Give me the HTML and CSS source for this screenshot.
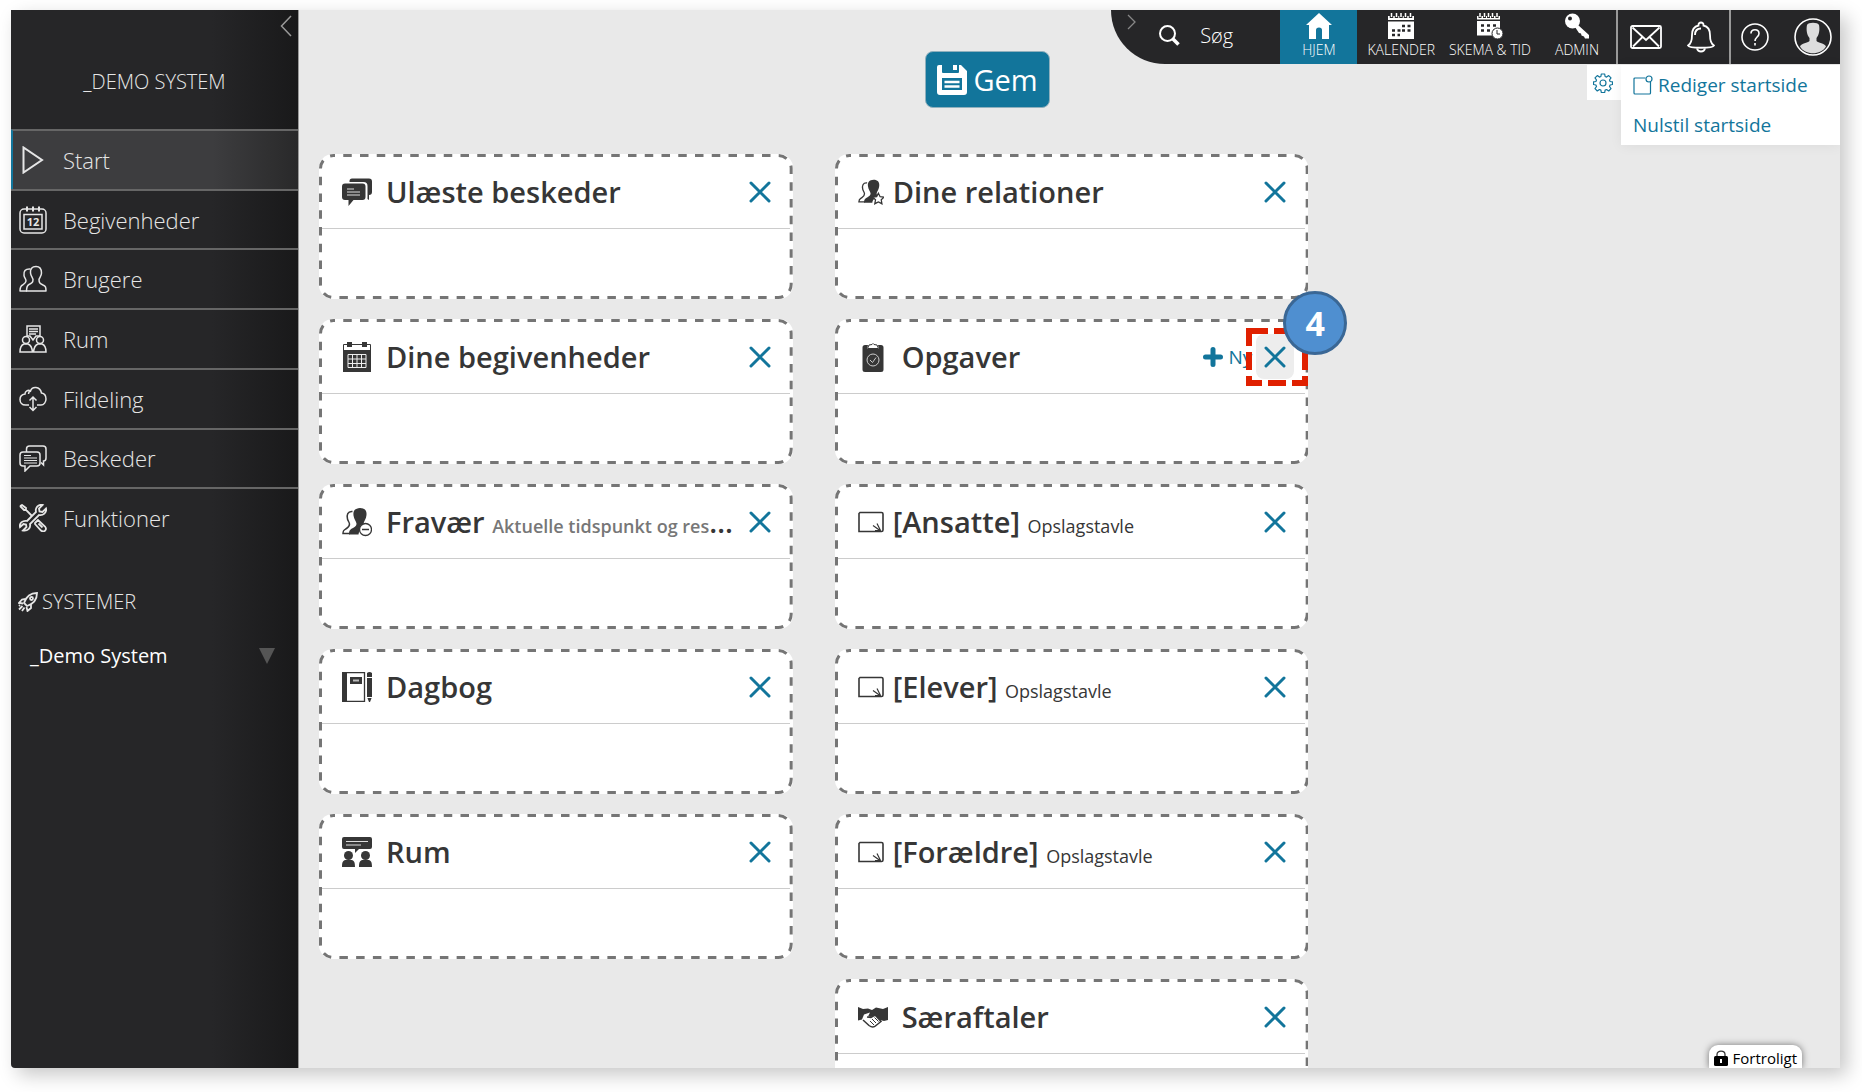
FILE: index.html
```html
<!DOCTYPE html>
<html lang="da">
<head>
    <meta charset="UTF-8">
    <meta name="viewport" content="width=device-width, initial-scale=1.0">
    <title>Startside</title>
    <link rel="stylesheet" href="styles.css">
</head>
<body>
    <!-- Shared icons -->
    <svg class="sprite" aria-hidden="true">
        <symbol id="close" viewBox="0 0 22 22">
            <path d="M2 2l18 18M20 2L2 20" fill="none" stroke="currentColor" stroke-width="3" stroke-linecap="round"/>
        </symbol>
        <symbol id="board" viewBox="0 0 26 22">
            <path d="M2 1.500h21.500q1.500 0 1.500 1.500v16q0 1.500-1.500 1.500H1V2.500z" fill="none" stroke="currentColor" stroke-width="1.600"/>
            <path d="M15 14.500l7 5M19 12.500l3.500 7M17 19.500h6" fill="none" stroke="currentColor" stroke-width="1.200"/>
        </symbol>
        <symbol id="persons" viewBox="0 0 30 30">
            <path d="M10.500 4.500C5.500 4 4.500 8 5.500 12c.5 2 2 3.500 2 5s-.5 3-3 4.500-3.500 1.500-3.500 5h7" fill="none" stroke="currentColor" stroke-width="1.500"/>
            <path d="M18 1c4.500 0 7 2.500 6.500 7-.3 4-2.500 6-3 8.500 0 2 1 3 3.500 4.200C22 21 17 22 16.500 27.500H7c0-4 1-5 4-6.500 2.500-1.200 3.500-2.500 3.500-4.500-.5-2.500-2.500-4-3-8C11 3.500 13 1.500 18 1z" fill="currentColor"/>
        </symbol>
        <symbol id="outline" overflow="visible">
            <rect class="outline-rect" x="1.500" y="1.500" rx="13" fill="none" stroke="#757575" stroke-width="3" stroke-dasharray="8.500 8.250" stroke-dashoffset="7"/>
        </symbol>
    </svg>

    <div class="app">
        <aside class="sidebar">
            <button class="sidebar-toggle" aria-label="Skjul menu">
                <svg width="12" height="22" viewBox="0 0 12 22"><path d="M11 1L1.500 11 11 21" fill="none" stroke="currentColor" stroke-width="1.500"/></svg>
            </button>
            <div class="system-name">_DEMO SYSTEM</div>

            <nav class="side-nav">
                <a href="#" class="active">
                    <svg viewBox="0 0 28 28"><path d="M4.500 1.500v25L23 14z" fill="none" stroke="currentColor" stroke-width="2"/></svg>
                    Start
                </a>
                <a href="#">
                    <svg viewBox="0 0 28 28">
                        <g fill="none" stroke="currentColor" stroke-width="1.500">
                            <rect x="1" y="3" width="26" height="24" rx="4"/>
                            <rect x="5" y="8.500" width="18" height="14.500"/>
                            <path d="M8 .5v5M14 .5v5M20 .5v5" stroke-width="2"/>
                        </g>
                        <text x="14" y="20" font-size="11" font-weight="700" text-anchor="middle" fill="currentColor">12</text>
                    </svg>
                    Begivenheder
                </a>
                <a href="#">
                    <svg viewBox="0 0 28 28"><g fill="none" stroke="currentColor" stroke-width="1.500" stroke-linejoin="round">
                        <path d="M17 1.500c-4 0-6 2.500-5.500 6.500.3 3 2 4.500 2.500 6.500 0 3-1 3.500-4 5-2 1-2.500 2.500-2.500 6.500H27c0-4-.5-5-3-6-3-1.500-4-2-4-5.500.5-2 2.500-3.500 2.500-6.500 0-4-1.500-6.500-5.500-6.500z"/>
                        <path d="M11.500 4C6 3.500 4.500 6.500 5 10.500c.3 2.500 2 3 2 5.500 0 2-1 2.500-3.500 4C1.500 21 1 22.500 1 26h7"/>
                    </g></svg>
                    Brugere
                </a>
                <a href="#">
                    <svg viewBox="0 0 28 28"><g fill="none" stroke="currentColor" stroke-width="1.500">
                        <path d="M8 1h13v10h-4l-3 4-3-4H8zM10 4h9M10 6.500h9M10 9h7"/>
                        <circle cx="7" cy="15" r="3.500"/><circle cx="21" cy="15" r="3.500"/>
                        <path d="M1 27c0-5 1-7 4-8h4c3 1 4 3 4.500 8zM14.500 27c.5-5 1.500-7 4.500-8h4c3 1 4 3 4 8z"/>
                    </g></svg>
                    Rum
                </a>
                <a href="#">
                    <svg viewBox="0 0 28 28"><g fill="none" stroke="currentColor" stroke-width="1.500">
                        <path d="M10 20H6.500C3 20 1 17.500 1 14.500S3 9.500 6 9c0-3 3-4.500 5.500-3C13 1 21 1 22.500 8c3 .5 4.500 3 4.500 6s-2 6-5 6h-4"/>
                        <path d="M11.500 6c-1.500.5-2 1.500-2 3M14 12v13M10.500 15.500L14 12l3.500 3.500M10.500 22l3.500 3.500 3.500-3.500"/>
                    </g></svg>
                    Fildeling
                </a>
                <a href="#">
                    <svg viewBox="0 0 28 28"><g fill="none" stroke="currentColor" stroke-width="1.500">
                        <path d="M4 8h14q3 0 3 3v8q0 3-3 3h-7l-5 5v-5H4q-3 0-3-3v-8q0-3 3-3z"/>
                        <path d="M7.500 8V5q0-3 3-3H24q3 0 3 3v9q0 3-2.500 3v4L22 18.500"/>
                        <path d="M5 11.500h7M5 14h13M5 16.500h13M5 19h13" stroke-width="1.200"/>
                    </g></svg>
                    Beskeder
                </a>
                <a href="#">
                    <svg viewBox="0 0 28 28"><g fill="none" stroke="currentColor" stroke-width="1.800">
                        <path d="M1 2l2-1 4 3v2l6 6M7 6H5L1 2"/>
                        <path d="M8 17l9-9c-1-4 2-8 6.500-7L20 4.500l.5 3 3 .5L27 4.500c1 4-3 7.500-7 6.500l-9 9c1 4-2.500 7.500-7 6.500L7.500 23 7 20.500 4.500 20 1 23c-1-4 3-7 7-6z"/>
                        <path d="M16 19l3-3 7 6.500c2.500 3-1 6.500-4 4L16 20zM19.500 19.500l4 4"/>
                    </g></svg>
                    Funktioner
                </a>
            </nav>

            <div class="systems-title">
                <svg width="20" height="20" viewBox="0 0 20 20"><g fill="none" stroke="currentColor" stroke-width="1.800">
                    <path d="M6 11C8 5 12 1 19 1c0 7-4 11-10 13z"/><circle cx="13.500" cy="6.500" r="1.500"/>
                    <path d="M7.500 7L4 7.500 1 11l4 .5M13 12.500V16l-3.500 3-1-4M4.500 14L1 17.500M6.500 15.500L4 19M2 13l-1 1"/>
                </g></svg>
                SYSTEMER
            </div>
            <button class="system-picker">_Demo System <span class="triangle"></span></button>
        </aside>

        <main class="main">
            <header class="topbar">
                <button class="topbar-toggle" aria-label="Skjul topmenu">
                    <svg width="9" height="16" viewBox="0 0 9 16"><path d="M1 1l7 7-7 7" fill="none" stroke="currentColor" stroke-width="1.300"/></svg>
                </button>
                <label class="search">
                    <svg width="21" height="21" viewBox="0 0 21 21"><circle cx="8.500" cy="8.500" r="7.500" fill="none" stroke="currentColor" stroke-width="2"/><path d="M13.500 13.500l6 6" stroke="currentColor" stroke-width="3.500"/></svg>
                    <input type="text" placeholder="Søg" aria-label="Søg">
                </label>
                <nav class="top-nav">
                    <a href="#" class="active">
                        <svg width="26" height="26" viewBox="0 0 26 26"><path d="M13 0l13 12h-3v14h-7v-9q0-2.500-3-2.500T10 17v9H3V12H0z" fill="currentColor"/></svg>
                        HJEM
                    </a>
                    <a href="#">
                        <svg width="26" height="26" viewBox="0 0 26 26">
                            <path d="M0 3h26v4H0zM0 8.500h26V26H0z" fill="currentColor"/>
                            <path d="M3.500 0v5M8.500 0v5M13 0v5M17.500 0v5M22.500 0v5" stroke="#262628" stroke-width="3.500"/>
                            <path d="M3.500 0v4M8.500 0v4M13 0v4M17.500 0v4M22.500 0v4" stroke="currentColor" stroke-width="1.500"/>
                            <path d="M14 13h9M14 17.500h9M4 17.500h9M4 22h8" stroke="#262628" stroke-width="2.500" stroke-dasharray="3 2.500"/>
                        </svg>
                        KALENDER
                    </a>
                    <a href="#">
                        <svg width="26" height="26" viewBox="0 0 26 26">
                            <path d="M0 3h23v3.500H0zM0 8h23v14.500H0z" fill="currentColor"/>
                            <path d="M3 0v5M7.500 0v5M11.500 0v5M15.500 0v5M20 0v5" stroke="#262628" stroke-width="3"/>
                            <path d="M3 0v4M7.500 0v4M11.500 0v4M15.500 0v4M20 0v4" stroke="currentColor" stroke-width="1.500"/>
                            <path d="M4 12.500h16M4 17.500h13" stroke="#262628" stroke-width="2.500" stroke-dasharray="3 3"/>
                            <circle cx="20.500" cy="20.500" r="5.500" fill="currentColor" stroke="#262628"/>
                            <path d="M20 17v4h3" fill="none" stroke="#262628"/>
                        </svg>
                        SKEMA &amp; TID
                    </a>
                    <a href="#">
                        <svg width="26" height="26" viewBox="0 0 26 26"><path d="M14 12l11 10v3.500h-4l-1-2-2.500-1-.5-2-2-.5L11 14" fill="currentColor"/><circle cx="8.500" cy="8" r="7.500" fill="currentColor"/><circle cx="6" cy="5.500" r="2" fill="#262628"/></svg>
                        ADMIN
                    </a>
                </nav>
                <div class="top-group">
                    <button aria-label="Beskeder">
                        <svg width="32" height="24" viewBox="0 0 32 24"><g fill="none" stroke="currentColor" stroke-width="1.800"><rect x="1" y="1" width="30" height="22" rx="1.500"/><path d="M2.500 2.500L16 15 29.500 2.500M3 21.500l9.500-9.500M29 21.500L19.500 12"/></g></svg>
                    </button>
                    <button aria-label="Notifikationer">
                        <svg width="28" height="32" viewBox="0 0 28 32"><g fill="none" stroke="currentColor" stroke-width="1.800"><path d="M11.500 4.500C11 .5 17 .5 16.500 4.500 21 5.500 23 9 23 14c0 6 1 9 4 10.500-1 3-25 3-26 0C4 23 5 20 5 14c0-5 2-8.500 6.500-9.500zM10 27.500c1 4 7 4 8 0M8 14c0-4 1.500-6.500 6-6.500"/></g></svg>
                    </button>
                </div>
                <div class="top-group">
                    <button aria-label="Hjælp">
                        <svg width="28" height="28" viewBox="0 0 28 28"><g fill="none" stroke="currentColor" stroke-width="1.600"><circle cx="14" cy="14" r="13"/><path d="M10 10.500c0-5 8-5 8 0 0 3.500-4 3.500-4 7.500M14 20v2.500"/></g></svg>
                    </button>
                    <button aria-label="Profil">
                        <svg width="38" height="38" viewBox="0 0 38 38"><circle cx="19" cy="19" r="18" fill="none" stroke="currentColor" stroke-width="1.600"/><path d="M13 7c1-3 11-3 12 0 1 5 0 10-2.500 13v3c2 2 8 2 9.500 5.500-5 9-21 9-26 0 1.500-3.500 7.500-3.500 9.500-5.500v-3C13 17 12 12 13 7z" fill="#ddd"/></svg>
                    </button>
                </div>
            </header>

            <div class="page-menu">
                <button class="gear" aria-label="Indstillinger">
                    <svg width="20" height="20" viewBox="0 0 20 20"><g fill="none" stroke="currentColor" stroke-width="1.200" stroke-linejoin="round"><circle cx="10" cy="10" r="3"/><path d="M8.300 1h3.400l.4 2.500 1.500.6 2.100-1.500 2.300 2.300-1.500 2.100.6 1.500 2.400.4v2.600l-2.400.5-.6 1.500 1.500 2.100-2.300 2.400-2.100-1.500-1.500.6-.4 2.400H8.300l-.4-2.400-1.500-.6-2.100 1.500L2 15.600l1.500-2.100-.6-1.500-2.400-.5V8.900l2.400-.4L3.500 7 2 4.900l2.300-2.300 2.100 1.500 1.500-.6z"/></g></svg>
                </button>
                <div class="page-menu-list">
                    <a href="#">
                        <svg width="20" height="20" viewBox="0 0 20 20"><g fill="none" stroke="currentColor" stroke-width="1.200"><path d="M12.500 3H2Q1 3 1 4v14q0 1 1 1h14.500q1 0 1-1V7"/><circle cx="16" cy="4" r="3"/></g></svg>
                        Rediger startside
                    </a>
                    <a href="#">Nulstil startside</a>
                </div>
            </div>

            <div class="save-row">
                <button class="save">
                    <svg width="30" height="30" viewBox="0 0 30 30">
                        <path d="M2 0h3v7q0 1 1 1h15q1 0 1-1V0h2l6 6v21q0 3-3 3H3q-3 0-3-3V2q0-2 2-2z" fill="currentColor"/>
                        <path d="M16 0h4v5h-4z" fill="currentColor"/>
                        <path d="M5 13h20v12H5z" fill="#12759b"/>
                        <path d="M7.500 17h15M7.500 21.500h15" stroke="currentColor" stroke-width="2.500"/>
                    </svg>
                    Gem
                </button>
            </div>

            <div class="board">
                <div class="column">
                    <section class="card">
                        <svg class="outline"><use href="#outline"/></svg>
                        <header>
                            <svg class="icon" viewBox="0 0 30 30"><path d="M10 1.500h17q3 0 3 3V15q0 3-3 3v5l-1.500-1V9q0-4-4-4H7.500V4q0-2.500 2.500-2.500z" fill="currentColor"/><path d="M3 6.500h17.500q3 0 3 3V20q0 3-3 3h-9L6.500 29v-6H3q-3 0-3-3V9.500q0-3 3-3z" fill="currentColor"/><path d="M5 12h7M5 15h13M5 18h13" stroke="#ddd"/></svg>
                            <h2>Ulæste beskeder</h2>
                            <button class="close" aria-label="Fjern Ulæste beskeder"><svg><use href="#close"/></svg></button>
                        </header>
                    </section>
                    <section class="card">
                        <svg class="outline"><use href="#outline"/></svg>
                        <header>
                            <svg class="icon" viewBox="0 0 30 30"><path d="M1.500 9V2.500h27V9" fill="none" stroke="currentColor"/><path d="M5 0h5v5H5zM20 0h5v5h-5zM1 8h28v22H1z" fill="currentColor"/><path d="M6 12.500h18v13H6zM6 17h18M6 21.500h18M10.500 12.500v13M15 12.500v13M19.500 12.500v13" fill="none" stroke="#eee"/></svg>
                            <h2>Dine begivenheder</h2>
                            <button class="close" aria-label="Fjern Dine begivenheder"><svg><use href="#close"/></svg></button>
                        </header>
                    </section>
                    <section class="card">
                        <svg class="outline"><use href="#outline"/></svg>
                        <header>
                            <svg class="icon" viewBox="0 0 30 30"><use href="#persons"/><circle cx="23.500" cy="22.500" r="6" fill="#fff" stroke="currentColor" stroke-width="1.300"/><path d="M20 22.500h7" stroke="currentColor" stroke-width="1.500"/></svg>
                            <h2>Fravær <small class="muted">Aktuelle tidspunkt og res</small>…</h2>
                            <button class="close" aria-label="Fjern Fravær"><svg><use href="#close"/></svg></button>
                        </header>
                    </section>
                    <section class="card">
                        <svg class="outline"><use href="#outline"/></svg>
                        <header>
                            <svg class="icon" viewBox="0 0 30 30"><path d="M.5.500h22v29H.5z" fill="none" stroke="currentColor" stroke-width="1.300"/><path d="M0 0h5v30H0zM8 5h12v7H8zM25 1q2.500-2 5 0v4h-5zM25 6h5v19l-2 5h-1l-2-5z" fill="currentColor"/><path d="M11 8.500h6" stroke="#bbb" stroke-width="2"/><path d="M25 25.500h5" stroke="#fff"/></svg>
                            <h2>Dagbog</h2>
                            <button class="close" aria-label="Fjern Dagbog"><svg><use href="#close"/></svg></button>
                        </header>
                    </section>
                    <section class="card">
                        <svg class="outline"><use href="#outline"/></svg>
                        <header>
                            <svg class="icon" viewBox="0 0 30 30"><path d="M2 0h26q2 0 2 2v8q0 2-2 2H17l-4 4v-4H2q-2 0-2-2V2q0-2 2-2zM0 30c0-5 1-7 4-7h5c3 0 4 2 4 7zM17 30c0-5 1-7 4-7h5c3 0 4 2 4 7z" fill="currentColor"/><circle cx="6.500" cy="18.500" r="4.500" fill="currentColor"/><circle cx="23.500" cy="18.500" r="4.500" fill="currentColor"/><path d="M4 4.500h22M4 8h15" stroke="#ddd" stroke-width="1.200"/></svg>
                            <h2>Rum</h2>
                            <button class="close" aria-label="Fjern Rum"><svg><use href="#close"/></svg></button>
                        </header>
                    </section>
                </div>

                <div class="column">
                    <section class="card">
                        <svg class="outline"><use href="#outline"/></svg>
                        <header>
                            <svg class="icon small" viewBox="0 0 30 30"><use href="#persons"/><path d="M23.500 16.500l2 4 4.500.5-3.200 3 .8 4.500-4.100-2.100-4.100 2.100.8-4.500L17 21l4.500-.5z" fill="#fff" stroke="currentColor" stroke-width="1.500"/></svg>
                            <h2>Dine relationer</h2>
                            <button class="close" aria-label="Fjern Dine relationer"><svg><use href="#close"/></svg></button>
                        </header>
                    </section>
                    <section class="card">
                        <svg class="outline"><use href="#outline"/></svg>
                        <header>
                            <svg class="icon" viewBox="0 0 30 30"><path d="M7 3h3l-1 4h12l-1-4h3q2.500 0 2.500 2.500v22Q25.500 30 23 30H7q-2.500 0-2.500-2.500v-22Q4.500 3 7 3z" fill="currentColor"/><path d="M9.500 6.500L11 3l3-.5q1-2 2 0l3 .5 1.500 3.500z" fill="#fff" stroke="currentColor"/><circle cx="15" cy="18" r="6" fill="none" stroke="#ccc"/><path d="M12 18l2.500 2.500 3.500-5" fill="none" stroke="#ccc"/></svg>
                            <h2>Opgaver</h2>
                            <button class="new"><svg width="20" height="20" viewBox="0 0 20 20"><path d="M10 2.500v15M2.500 10h15" stroke="currentColor" stroke-width="5" stroke-linecap="round"/></svg>Ny</button>
                            <button class="close hovered" aria-label="Fjern Opgaver"><svg><use href="#close"/></svg></button>
                        </header>
                        <div class="marker">
                            <svg width="62" height="58" viewBox="0 0 62 58"><g stroke="#e02000" stroke-width="6"><path d="M0 3h62" stroke-dasharray="22 6"/><path d="M0 55h62" stroke-dasharray="16 6 18 6"/><path d="M3 0v58M59 0v58" stroke-dasharray="18 6"/></g></svg>
                            <span class="step">4</span>
                        </div>
                    </section>
                    <section class="card">
                        <svg class="outline"><use href="#outline"/></svg>
                        <header>
                            <svg class="icon small"><use href="#board"/></svg>
                            <h2>[Ansatte] <small>Opslagstavle</small></h2>
                            <button class="close" aria-label="Fjern Ansatte"><svg><use href="#close"/></svg></button>
                        </header>
                    </section>
                    <section class="card">
                        <svg class="outline"><use href="#outline"/></svg>
                        <header>
                            <svg class="icon small"><use href="#board"/></svg>
                            <h2>[Elever] <small>Opslagstavle</small></h2>
                            <button class="close" aria-label="Fjern Elever"><svg><use href="#close"/></svg></button>
                        </header>
                    </section>
                    <section class="card">
                        <svg class="outline"><use href="#outline"/></svg>
                        <header>
                            <svg class="icon small"><use href="#board"/></svg>
                            <h2>[Forældre] <small>Opslagstavle</small></h2>
                            <button class="close" aria-label="Fjern Forældre"><svg><use href="#close"/></svg></button>
                        </header>
                    </section>
                    <section class="card">
                        <svg class="outline"><use href="#outline"/></svg>
                        <header>
                            <svg class="icon" viewBox="0 0 30 30"><path d="M0 5l5 2 5-.5L14 8l4-2.500 7 1.500 5-2v13l-4 1-4-1-5-5-4 2-3-.5 2-4-6 2-2 5-4 1-2-1z" fill="currentColor"/><path d="M5 18l6 5.500q4 3 7 0l5-4-6-6.500-4 2.500-4-.5" fill="#fff" stroke="currentColor" stroke-width="1.500"/><path d="M14 17l4 4M12 19l4 4M16.500 15.500l4 4" stroke="currentColor"/></svg>
                            <h2>Særaftaler</h2>
                            <button class="close" aria-label="Fjern Særaftaler"><svg><use href="#close"/></svg></button>
                        </header>
                    </section>
                </div>
            </div>

            <div class="confidential">
                <svg width="14" height="16" viewBox="0 0 14 16"><path d="M3 7V4.500C3 0 11 0 11 4.500V7" fill="none" stroke="#333" stroke-width="1.300"/><rect y="6" width="14" height="10" rx="1.500"/><path d="M7 9v4" stroke="#fff" stroke-width="2"/></svg>
                Fortroligt
            </div>
        </main>
    </div>
</body>
</html>
```
FILE: styles.css
```css
* {
    box-sizing: border-box;
}

body {
    margin: 0;
    height: 100vh;
    padding: 10px 22px 24px 11px;
    background-color: #fff;
    font-family: "Open Sans", "Noto Sans", sans-serif;
    font-size: 20px;
    color: #363636;
    overflow: hidden;
}

a {
    color: inherit;
    text-decoration: none;
}

button {
    font: inherit;
    color: inherit;
    background: none;
    border: 0;
    padding: 0;
    cursor: pointer;
}

svg {
    display: block;
    flex-shrink: 0;
}

.sprite {
    position: absolute;
    width: 0;
    height: 0;
}

.app {
    display: flex;
    height: 100%;
    box-shadow: 7px 7px 18px rgba(0, 0, 0, 0.22);
}

/* Sidebar */
.sidebar {
    display: flex;
    flex-direction: column;
    width: 288px;
    flex-shrink: 0;
    background: linear-gradient(to right, #262628 70%, #19191a);
    border-right: 1px solid #999;
    border-bottom-left-radius: 4px;
    color: #e6e6e6;
    font-weight: 300;
}

.sidebar-toggle {
    align-self: flex-end;
    margin: 5px 6px 0 0;
    color: #999;
}

.system-name {
    padding: 31px 0 33px;
    line-height: 28px;
    text-align: center;
}

.side-nav {
    display: grid;
    grid-auto-rows: 1fr;
    height: 418px;
    font-size: 22px;
}

.side-nav a {
    display: flex;
    align-items: center;
    gap: 16px;
    padding-left: 8px;
    border-top: 2px solid #666;
}

.side-nav a.active {
    padding-left: 6px;
    border-left: 2px solid #12759b;
    background: linear-gradient(to right, #3d3d3f 70%, #29292a);
}

.side-nav svg {
    width: 28px;
    height: 28px;
}

.systems-title {
    display: flex;
    align-items: center;
    gap: 4px;
    padding: 41px 7px 0;
    line-height: 28px;
}

.system-picker {
    display: flex;
    align-items: center;
    justify-content: space-between;
    padding: 26px 23px 0 19px;
    line-height: 28px;
    font-weight: 400;
    color: #fff;
}

.triangle {
    border: 8px solid transparent;
    border-top: 16px solid #555;
    border-bottom: 0;
}

/* Main area */
.main {
    position: relative;
    flex: 1;
    min-width: 0;
    overflow: hidden;
    background-color: #e9e9e9;
}

.topbar {
    position: absolute;
    top: 0;
    right: 0;
    display: flex;
    height: 54px;
    background-color: #262628;
    border-bottom-left-radius: 54px;
    color: #fff;
    font-weight: 300;
}

.topbar-toggle {
    align-self: flex-start;
    margin: 4px 0 0 16px;
    color: #888;
}

.search {
    display: flex;
    align-items: center;
    gap: 20px;
    padding: 0 0 4px 23px;
}

.search input {
    width: 80px;
    padding: 0;
    border: 0;
    background: none;
    font: inherit;
    color: #fff;
    outline: none;
}

.search input::placeholder {
    color: #fff;
    opacity: 1;
}

.top-nav {
    display: flex;
    font-size: 14px;
    line-height: 20px;
}

.top-nav a {
    display: flex;
    flex-direction: column;
    align-items: center;
    gap: 1px;
    padding: 3px 7px 0;
}

.top-nav a.active {
    margin-right: 3px;
    padding: 3px 22px 0;
    background-color: #12759b;
}

.top-nav a:last-child {
    padding: 3px 17px 0;
}

.top-group {
    display: flex;
    align-items: center;
    gap: 25px;
    padding: 0 14px 0 12px;
    border-left: 2px solid #999;
}

.top-group:last-child {
    padding: 0 8px 0 10px;
}

/* Drop-down under the top bar */
.page-menu {
    position: absolute;
    top: 55px;
    right: 0;
    display: flex;
    align-items: flex-start;
    color: #12759b;
    font-size: 19px;
}

.gear {
    padding: 8px 8px 7px 6px;
    background-color: #fff;
}

.page-menu-list {
    width: 219px;
    background-color: #fff;
    box-shadow: 0 1px 12px rgba(0, 0, 0, 0.06);
}

.page-menu-list a {
    display: flex;
    align-items: center;
    gap: 5px;
    padding: 0 12px;
    line-height: 40px;
}

/* Save button */
.save-row {
    display: flex;
    justify-content: center;
    padding: 41px 164px 46px 0;
}

.save {
    display: flex;
    align-items: center;
    gap: 6px;
    padding: 0 11px;
    line-height: 55px;
    border: 1px solid #8fb0bd;
    border-radius: 8px;
    background-color: #12759b;
    color: #fff;
    font-size: 29px;
}

/* Board with widget cards */
.board {
    display: grid;
    grid-template-columns: repeat(3, 1fr);
    gap: 42px;
    padding: 0 16px 0 20px;
}

.column {
    display: flex;
    flex-direction: column;
    gap: 20px;
    min-width: 0;
}

.card {
    position: relative;
    min-height: 145px;
    padding: 3px;
    border-radius: 14px;
    background-color: #fff;
}

.outline {
    position: absolute;
    top: 0;
    left: 0;
    width: 100%;
    height: 100%;
    pointer-events: none;
}

.outline-rect {
    width: calc(100% - 3px);
    height: calc(100% - 3px);
}

.card header {
    display: flex;
    align-items: center;
    height: 72px;
    padding: 0 11px 2px 20px;
    border-bottom: 1px solid #ccc;
}

.icon {
    width: 30px;
    height: 30px;
    margin-right: 14px;
}

.icon.small {
    width: 26px;
    height: 26px;
    margin-right: 9px;
}

.card h2 {
    flex: 1;
    margin: 0;
    font-size: 29px;
    font-weight: 600;
    white-space: nowrap;
    overflow: hidden;
    text-overflow: ellipsis;
}

.card small {
    font-size: 18px;
    font-weight: 400;
}

.card small.muted {
    font-weight: 600;
    color: #777;
}

.close {
    display: flex;
    align-items: center;
    justify-content: center;
    width: 38px;
    height: 45px;
    border-radius: 8px;
    color: #12759b;
}

.close svg {
    width: 22px;
    height: 22px;
}

.close.hovered {
    background-color: #ededed;
}

.new {
    display: flex;
    align-items: center;
    gap: 6px;
    margin-right: 4px;
    color: #12759b;
    font-size: 19px;
}

/* Step marker over the close button */
.marker {
    position: absolute;
    top: 9px;
    right: 0;
    z-index: 1;
}

.step {
    position: absolute;
    top: -37px;
    right: -39px;
    width: 64px;
    height: 64px;
    border: 3px solid #3a6795;
    border-radius: 50%;
    background-color: #4f8fd0;
    color: #fff;
    font-size: 34px;
    font-weight: 700;
    line-height: 58px;
    text-align: center;
}

.confidential {
    position: absolute;
    right: 38px;
    bottom: 0;
    display: flex;
    align-items: center;
    gap: 5px;
    padding: 3px 5px 0;
    line-height: 20px;
    border-radius: 9px 9px 0 0;
    background-color: #fff;
    box-shadow: 0 0 7px rgba(0, 0, 0, 0.5);
    color: #000;
    font-size: 15px;
}
```
